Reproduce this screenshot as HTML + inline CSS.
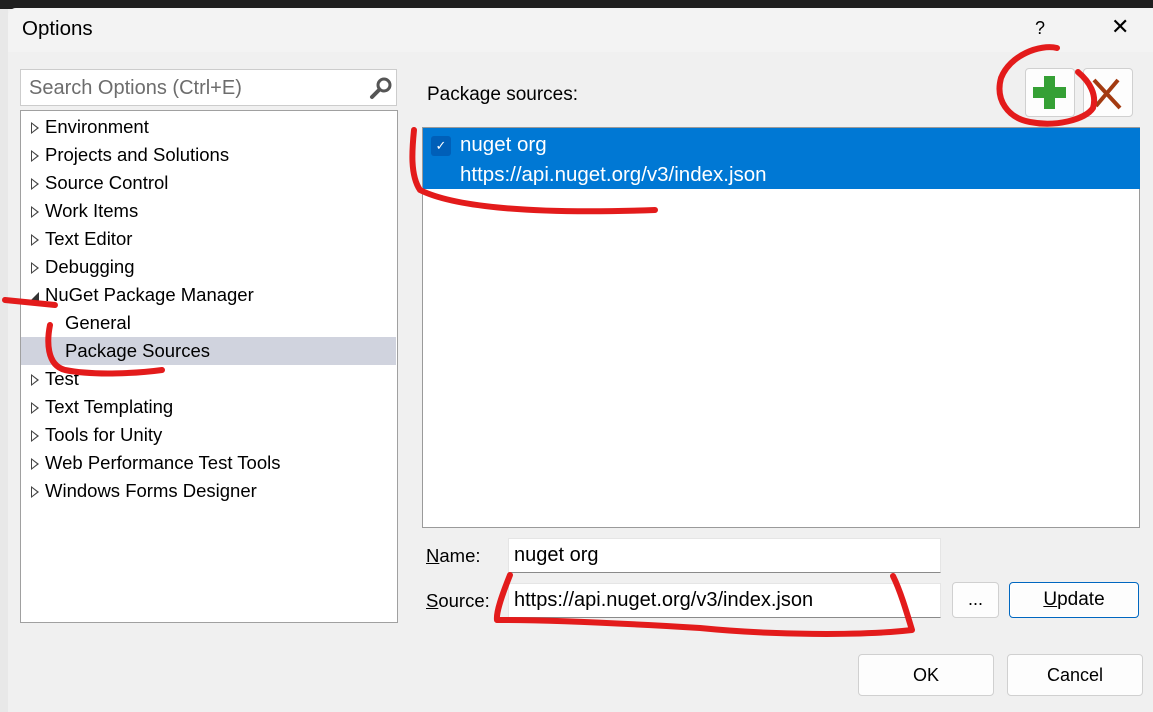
<!DOCTYPE html>
<html><head><meta charset="utf-8"><style>
*{margin:0;padding:0;box-sizing:border-box}
body{width:1153px;height:712px;background:#f0f0f0;font-family:"Liberation Sans",sans-serif;position:relative;overflow:hidden;color:#000}
.a{position:absolute}
.tree div{position:absolute;left:0;width:375px;height:28px;line-height:28px;font-size:18.5px}
.tri{display:inline-block;width:0;height:0;border-top:6px solid transparent;border-bottom:6px solid transparent;border-left:8px solid #444;position:relative;top:1px;margin-right:6px;margin-left:10px}
.tri i{position:absolute;left:-7px;top:-4px;width:0;height:0;border-top:4px solid transparent;border-bottom:4px solid transparent;border-left:5px solid #fff}
.btn{position:absolute;background:#fdfdfd;border:1px solid #d0d0d0;border-radius:4px;text-align:center;font-size:18px}
.inp{position:absolute;background:#fff;border:1px solid #e5e5e5;border-bottom:1px solid #8a8a8a;font-size:20px;padding-left:5px}
</style></head><body>
<div class="a" style="left:0;top:0;width:1153px;height:9px;background:#1f1f1f"></div>
<div class="a" style="left:8px;top:8px;width:1145px;height:44px;background:#f3f3f3;border-top-left-radius:8px"></div>
<div class="a" style="left:0;top:9px;width:8px;height:703px;background:#e8e8e8"></div>
<div class="a" style="left:22px;top:17px;font-size:20.5px">Options</div>
<div class="a" style="left:1035px;top:18px;font-size:18px">?</div>
<div class="a" style="left:1111px;top:14px;font-size:22px">✕</div>

<div class="a" style="left:20px;top:69px;width:377px;height:37px;background:#fff;border:1px solid #ccc;font-size:20px;color:#6d6d6d;padding:7px 0 0 8px">Search Options (Ctrl+E)</div>
<svg class="a" style="left:368px;top:76px" width="26" height="24"><circle cx="16" cy="9" r="6" fill="none" stroke="#555" stroke-width="3"/><line x1="11" y1="14" x2="4" y2="21" stroke="#555" stroke-width="4" stroke-linecap="round"/></svg>

<div class="a tree" style="left:20px;top:110px;width:378px;height:513px;background:#fff;border:1px solid #a0a0a0">
<div style="top:2px"><span class="tri"><i></i></span>Environment</div>
<div style="top:30px"><span class="tri"><i></i></span>Projects and Solutions</div>
<div style="top:58px"><span class="tri"><i></i></span>Source Control</div>
<div style="top:86px"><span class="tri"><i></i></span>Work Items</div>
<div style="top:114px"><span class="tri"><i></i></span>Text Editor</div>
<div style="top:142px"><span class="tri"><i></i></span>Debugging</div>
<div style="top:170px"><span style="display:inline-block;width:0;height:0;border-left:9px solid transparent;border-bottom:9px solid #333;margin:0 6px 0 9px"></span>NuGet Package Manager</div>
<div style="top:198px;padding-left:44px">General</div>
<div style="top:226px;padding-left:44px;background:#d0d3de">Package Sources</div>
<div style="top:254px"><span class="tri"><i></i></span>Test</div>
<div style="top:282px"><span class="tri"><i></i></span>Text Templating</div>
<div style="top:310px"><span class="tri"><i></i></span>Tools for Unity</div>
<div style="top:338px"><span class="tri"><i></i></span>Web Performance Test Tools</div>
<div style="top:366px"><span class="tri"><i></i></span>Windows Forms Designer</div>
</div>

<div class="a" style="left:427px;top:84px;font-size:19px">Package sources:</div>
<div class="btn" style="left:1025px;top:68px;width:50px;height:49px"></div>
<div class="a" style="left:1033px;top:87px;width:33px;height:11px;background:#35a035"></div>
<div class="a" style="left:1044px;top:76px;width:11px;height:33px;background:#35a035"></div>
<div class="btn" style="left:1083px;top:68px;width:50px;height:49px"></div>
<svg class="a" style="left:1090px;top:76px" width="36" height="36"><path d="M4 4 L30 32 M28 4 L6 30" stroke="#a33a10" stroke-width="4" fill="none"/></svg>

<div class="a" style="left:422px;top:127px;width:718px;height:401px;background:#fff;border:1px solid #9a9a9a"></div>
<div class="a" style="left:423px;top:128px;width:717px;height:61px;background:#0078d4"></div>
<div class="a" style="left:431px;top:136px;width:20px;height:20px;background:#005fb8;border-radius:3px;color:#fff;font-size:13px;text-align:center;line-height:20px">✓</div>
<div class="a" style="left:460px;top:133px;font-size:20.5px;color:#fff">nuget org</div>
<div class="a" style="left:460px;top:163px;font-size:20.5px;color:#fff">https://api.nuget.org/v3/index.json</div>

<div class="a" style="left:426px;top:545px;font-size:18.5px"><u>N</u>ame:</div>
<div class="inp" style="left:508px;top:538px;width:433px;height:35px;line-height:33px">nuget org</div>
<div class="a" style="left:426px;top:590px;font-size:18.5px"><u>S</u>ource:</div>
<div class="inp" style="left:508px;top:583px;width:433px;height:35px;line-height:33px">https://api.nuget.org/v3/index.json</div>
<div class="btn" style="left:952px;top:582px;width:47px;height:36px;line-height:32px">...</div>
<div class="btn" style="left:1009px;top:582px;width:130px;height:36px;line-height:34px;border:1px solid #0067c0;box-shadow:inset 0 0 0 1px #fff;font-size:19px"><u>U</u>pdate</div>
<div class="btn" style="left:858px;top:654px;width:136px;height:42px;line-height:40px">OK</div>
<div class="btn" style="left:1007px;top:654px;width:136px;height:42px;line-height:40px">Cancel</div>

<svg class="a" style="left:0;top:0" width="1153" height="712">
<g fill="none" stroke="#e31b1b" stroke-width="6" stroke-linecap="round" stroke-linejoin="round">
<path d="M1057 48 C1040 44 1010 55 1001 78 C995 100 1008 118 1030 122 C1055 127 1085 120 1093 108 C1097 95 1090 82 1078 72"/>
<path d="M414 130 C412 150 410 175 420 190 C450 205 520 215 655 210"/>
<path d="M5 300 L55 305"/>
<path d="M50 325 C47 340 46 365 65 370 C95 376 140 373 162 370"/>
<path d="M510 575 C502 595 496 612 497 620 C540 620 600 622 700 628 C770 635 860 636 912 630 C906 610 900 590 893 576"/>
</g></svg>
</body></html>
